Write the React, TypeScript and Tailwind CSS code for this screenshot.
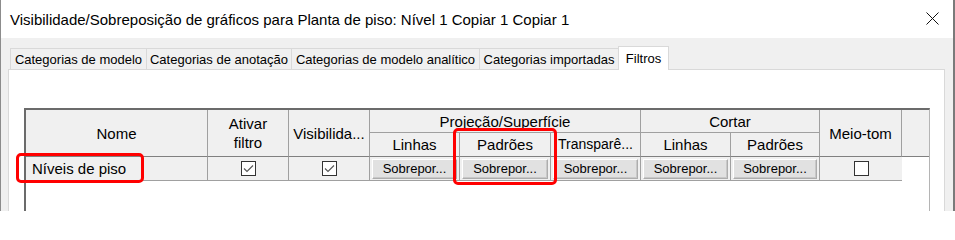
import React from "react";

const TABS = [
  { label: "Categorias de modelo", w: "w-[137px]" },
  { label: "Categorias de anotação", w: "w-[146px]" },
  { label: "Categorias de modelo analítico", w: "w-[189px]" },
  { label: "Categorias importadas", w: "w-[140px]" },
];

function TitleBar() {
  return (
    <div className="flex h-[38px] items-center justify-between bg-white pl-[9px] pr-[14px]">
      <span className="text-[15px] leading-none">
        Visibilidade/Sobreposição de gráficos para Planta de piso: Nível 1 Copiar 1 Copiar 1
      </span>
      <svg width="13" height="13" viewBox="0 0 13 13" className="mb-[1px]">
        <path d="M0.5 0.5 L12.5 12.5 M12.5 0.5 L0.5 12.5" stroke="#111" strokeWidth="1" />
      </svg>
    </div>
  );
}

function Tabs() {
  return (
    <div className="relative z-10 -mb-px flex h-[32px] items-end pl-[9px]">
      {TABS.map((t) => (
        <div
          key={t.label}
          className={`${t.w} mb-px -ml-px flex h-[21px] items-center justify-center border border-b-0 border-[#d9d9d9] bg-[#f0f0f0] text-[13px] leading-none first:ml-0`}
        >
          {t.label}
        </div>
      ))}
      <div className="-ml-px flex h-[24px] w-[51px] items-start justify-center border border-b-0 border-[#d9d9d9] bg-white pt-[5px] text-[13px] leading-none">
        Filtros
      </div>
    </div>
  );
}

function Check({ checked }: { checked?: boolean }) {
  return (
    <div className="flex h-[15px] w-[15px] items-center justify-center border border-[#333] bg-white">
      {checked && (
        <svg width="11" height="9" viewBox="0 0 11 9">
          <path d="M1 4.5 L4 7.5 L10 1.5" fill="none" stroke="#555" strokeWidth="1.1" />
        </svg>
      )}
    </div>
  );
}

function OverrideButton() {
  return (
    <div className="flex h-[20px] w-full items-center justify-center border border-[#adadad] border-l-white border-t-white bg-[#e1e1e1] text-[13px] leading-none shadow-[inset_-1px_-1px_0_#c8c8c8]">
      Sobrepor...
    </div>
  );
}

// header cells share the grid lines; font size is set per cell
const cell = "flex items-center justify-center border-b border-r border-[#a0a0a0] bg-[#f0f0f0] text-center leading-[19px]";
const head = `${cell} text-[15px]`;
const data = "flex items-center justify-center border-b border-r border-[#a0a0a0] bg-[#f0f0f0] px-[2px]";

function FilterTable() {
  return (
    <div className="h-full w-[906px] border-l-2 border-r border-t-2 border-[#6b6b6b] border-r-[#b4b4b4]">
      <div className="grid grid-cols-[182px_81px_81px_90px_91px_90px_90px_89px_82px_27px] grid-rows-[23px_24px_24px]">
        <div className={`${head} row-span-2 border-b-[#808080]`}>Nome</div>
        <div className={`${head} row-span-2 border-b-[#808080]`}>
          Ativar
          <br />
          filtro
        </div>
        <div className={`${head} row-span-2 border-b-[#808080]`}>Visibilida...</div>
        <div className={`${head} col-span-3`}>Projeção/Superfície</div>
        <div className={`${head} col-span-2`}>Cortar</div>
        <div className={`${head} row-span-2 border-b-[#808080]`}>Meio-tom</div>
        <div className="row-span-2 border-b border-[#808080] bg-[#f0f0f0]" />

        <div className={`${head} border-b-[#808080]`}>Linhas</div>
        <div className={`${head} border-b-[#808080]`}>Padrões</div>
        <div className={`${cell} border-b-[#808080] text-[14px]`}>Transparê...</div>
        <div className={`${head} border-b-[#808080]`}>Linhas</div>
        <div className={`${head} border-b-[#808080]`}>Padrões</div>

        <div className={`${data} justify-start pl-[6px] text-[15px] leading-none`}>Níveis de piso</div>
        <div className={data}>
          <Check checked />
        </div>
        <div className={data}>
          <Check checked />
        </div>
        <div className={data}>
          <OverrideButton />
        </div>
        <div className={data}>
          <OverrideButton />
        </div>
        <div className={data}>
          <OverrideButton />
        </div>
        <div className={data}>
          <OverrideButton />
        </div>
        <div className={data}>
          <OverrideButton />
        </div>
        <div className={`${data} border-r-0`}>
          <Check />
        </div>
        <div />
      </div>
    </div>
  );
}

export default function App() {
  return (
    <div className="relative h-[211px] w-[955px] overflow-hidden border-l border-r-2 border-l-[#8c8c8c] border-r-[#7a7a7a] bg-[#f0f0f0] font-['Liberation_Sans',Arial,sans-serif] text-black">
      <TitleBar />
      <Tabs />
      <div className="ml-[7px] mr-[8px] h-[200px] border border-[#d9d9d9] bg-white pl-[15px] pt-[38px]">
        <FilterTable />
      </div>

      {/* annotation boxes */}
      <div className="absolute left-[15px] top-[153px] h-[30px] w-[128px] rounded-[5px] border-[3px] border-[#ff0000]" />
      <div className="absolute left-[452px] top-[128px] h-[57px] w-[104px] rounded-[5px] border-[3px] border-[#ff0000]" />
    </div>
  );
}
